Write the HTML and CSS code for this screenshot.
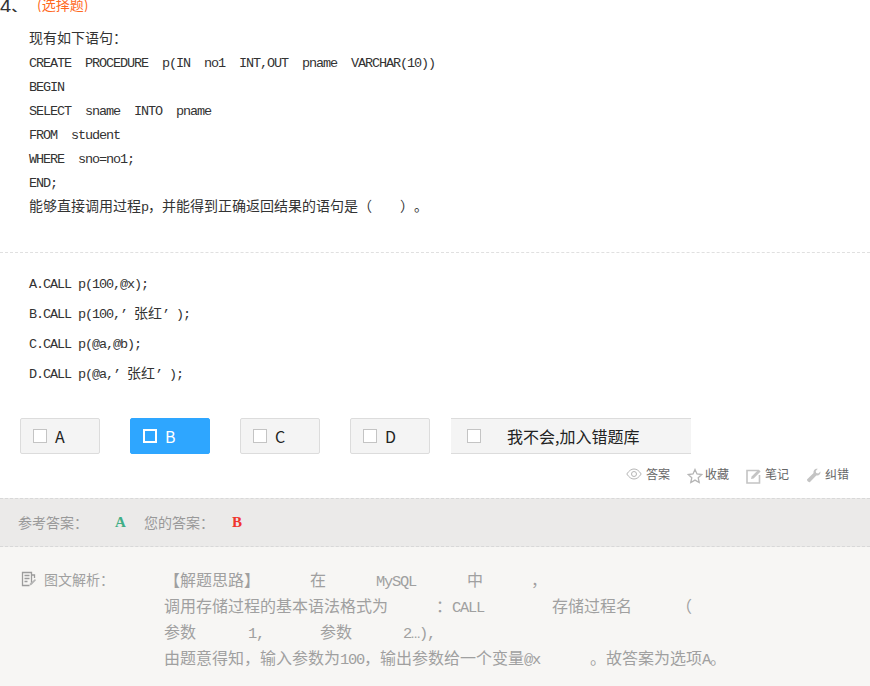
FILE: index.html
```html
<!DOCTYPE html>
<html lang="zh-CN">
<head>
<meta charset="utf-8">
<title>选择题</title>
<link rel="stylesheet" href="styles.css">
</head>
<body>
<div class="q-head"><div class="q-head-inner"><span class="q-num">4、</span><span class="q-type">(选择题)</span></div></div>
<div class="stem">
<p>现有如下语句：</p>
<p><span class="m">CREATE  PROCEDURE  p(IN  no1  INT,OUT  pname  VARCHAR(10))</span></p>
<p><span class="m">BEGIN</span></p>
<p><span class="m">SELECT  sname  INTO  pname</span></p>
<p><span class="m">FROM  student</span></p>
<p><span class="m">WHERE  sno=no1;</span></p>
<p><span class="m">END;</span></p>
<p>能够直接调用过程<span class="m">p</span>，并能得到正确返回结果的语句是（<span class="m">    </span>）。</p>
</div>
<div class="options">
<p><span class="m">A.CALL p(100,@x);</span></p>
<p><span class="m">B.CALL p(100,’ </span>张红<span class="m">’ );</span></p>
<p><span class="m">C.CALL p(@a,@b);</span></p>
<p><span class="m">D.CALL p(@a,’ </span>张红<span class="m">’ );</span></p>
</div>
<div class="choices">
<div class="choice"><i class="box"></i>A</div>
<div class="choice on"><i class="box"></i>B</div>
<div class="choice"><i class="box"></i>C</div>
<div class="choice"><i class="box"></i>D</div>
<div class="choice wide"><i class="box"></i>我不会,加入错题库</div>
</div>
<div class="tools">
<span class="tool t1"><svg width="16" height="12" viewBox="0 0 16 12"><path d="M.8 6C3 2.600 5.400 1 8 1s5 1.600 7.200 5C13 9.400 10.600 11 8 11S3 9.400.8 6z" fill="none" stroke="#b5b5b5"/><circle cx="8" cy="6" r="2.500" fill="none" stroke="#b5b5b5"/></svg>答案</span>
<span class="tool t2"><svg width="16" height="16" viewBox="0 0 16 16"><path d="M8 1.500l2 4.500 4.800.5-3.600 3.200 1 4.800L8 12.100l-4.200 2.400 1-4.800L1.200 6.500 6 6z" fill="none" stroke="#b5b5b5" stroke-width="1.300"/></svg>收藏</span>
<span class="tool t3"><svg width="16" height="16" viewBox="0 0 16 16"><path d="M12 2.500H1v12.500h12.500V7" fill="none" stroke="#c4c4c4" stroke-width="1.600"/><path d="M5 11l.6-2.600L12.600 1.500l2 2L7.600 10.400z" fill="#c4c4c4"/></svg>笔记</span>
<span class="tool t4"><svg width="15" height="15" viewBox="0 0 15 15"><path d="M14.500 3.500c.4 2.400-1.600 4.500-4.200 3.900L4 14c-1 1-3.800-1.500-2.800-2.700L7.600 5C7 2.300 9.300.2 11.800.8L9.700 3l.5 2 2 .6z" fill="#c4c4c4"/></svg>纠错</span>
</div>
<div class="result">
<span class="lbl">参考答案：</span><span class="ans good">A</span><span class="lbl lbl-you">您的答案：</span><span class="ans bad">B</span>
</div>
<div class="analysis">
<div class="a-label"><svg width="16" height="16" viewBox="0 0 16 16"><path d="M10.500 12.500V1.500H1.500v13h7M3.500 4.500h5M3.500 7.500h5M3.500 10.500h3" fill="none" stroke="#9c9c9c" stroke-width="1.300"/><path d="M8.500 14.500l.5-2L14 8l1 1.200-4.600 4.700z" fill="#b5b5b5"/><path d="M10.500 4h3v3" fill="none" stroke="#9c9c9c" stroke-width="1.300"/></svg>图文解析：</div>
<div class="a-body">
<p>【解题思路】<i class="g g50"></i>在<i class="g g50"></i><span class="m">MySQL</span><i class="g g51"></i>中<i class="g g48"></i>，</p>
<p>调用存储过程的基本语法格式为<i class="g g48"></i>：<span class="m">CALL</span><i class="g g68"></i>存储过程名<i class="g g44"></i>（</p>
<p>参数<i class="g g52"></i><span class="m">1,</span><i class="g g56"></i>参数<i class="g g51"></i><span class="m">2…),</span></p>
<p>由题意得知，输入参数为<span class="m">100</span>，输出参数给一个变量<span class="m">@x</span><i class="g g50"></i>。故答案为选项<span class="m">A</span>。</p>
</div>
</div>
</body>
</html>
```
FILE: styles.css
```css
* { box-sizing: border-box; }
html, body { margin: 0; padding: 0; }
body {
  width: 870px;
  height: 686px;
  overflow: hidden;
  background: #fff;
  color: #333;
  font-family: "Noto Sans CJK SC", sans-serif;
  font-size: 14px;
  text-spacing-trim: space-all;
}
p { margin: 0; }
.m {
  font-family: "Liberation Mono", "Noto Sans CJK SC", monospace;
  font-size: 13.5px;
  letter-spacing: -1.1px;
  line-height: 1;
  white-space: pre;
}
.q-head { height: 12px; overflow: hidden; }
.q-head-inner { display: flex; align-items: center; margin-top: -11px; height: 30px; }
.q-num { font-family: "Liberation Sans", sans-serif; font-size: 20px; color: #333; width: 37px; }
.q-type { font-size: 14px; color: #ff6a1f; }
.stem {
  margin-top: 13px;
  padding: 0 0 34px 29px;
  line-height: 24px;
  border-bottom: 1px dashed #e0e0e0;
  height: 228px;
}
.options { padding: 14px 0 0 29px; line-height: 30px; height: 136px; }
.choices { display: flex; padding-left: 20px; margin-top: 29px; }
.choice {
  display: flex;
  align-items: center;
  width: 80px;
  height: 36px;
  margin-right: 30px;
  padding-left: 12px;
  background: #f4f4f4;
  border: 1px solid #dcdcdc;
  border-radius: 2px;
  font-size: 16px;
  color: #222;
}
.choice.on { background: #2ea6ff; border-color: #2ea6ff; color: #fff; }
.box {
  width: 14px;
  height: 14px;
  margin-right: 8px;
  background: #fff;
  border: 1px solid #c4c4c4;
}
.on .box { background: transparent; border: 2px solid #fff; }
.choice.wide {
  width: 240px;
  margin: 0 0 0 -9px;
  padding-left: 16px;
  border-width: 1px 0;
  border-radius: 0;
}
.wide .box { margin-right: 26px; }
.tools {
  display: flex;
  justify-content: flex-end;
  align-items: center;
  height: 44px;
  padding: 0 21px 0 0;
  font-size: 12px;
  color: #666;
}
.tool { display: flex; align-items: center; line-height: 16px; margin-top: -4px; }
.t1 svg { margin-right: 4px; }
.t2 { margin-left: 17px; }
.t2 svg { margin: 3px 2px 0 0; }
.t3 { margin-left: 17px; }
.t3 svg { margin: 3px 3px 0 0; }
.t4 { margin-left: 17px; }
.t4 svg { margin: 3px 4px 0 0; }
.result {
  display: flex;
  align-items: center;
  height: 49px;
  padding: 0 0 2px 18px;
  background: #ebeae9;
  border-top: 1px dashed #d8d8d8;
  border-bottom: 1px dashed #d8d8d8;
  color: #999;
}
.lbl { width: 97px; }
.lbl-you { width: 88px; }
.ans {
  font-family: "Liberation Serif", serif;
  font-size: 15px;
  font-weight: bold;
  line-height: 1;
  width: 29px;
  margin-top: 1px;
}
.good { color: #3fae86; }
.bad { color: #f0352f; }
.analysis {
  display: flex;
  height: 140px;
  padding: 19px 0 0 21px;
  background: #f7f6f4;
  color: #a0a0a0;
}
.a-label { display: flex; align-items: flex-start; width: 143px; line-height: 26px; }
.a-label svg { margin: 5px 7px 0 0; }
.a-body { line-height: 26px; flex: 1; font-size: 16px; }
.a-body .m { font-size: 15.4px; letter-spacing: -1.24px; }
.g { display: inline-block; }
.g44 { width: 44px; }
.g48 { width: 48px; }
.g50 { width: 50px; }
.g51 { width: 51px; }
.g52 { width: 52px; }
.g56 { width: 56px; }
.g68 { width: 68px; }
```
